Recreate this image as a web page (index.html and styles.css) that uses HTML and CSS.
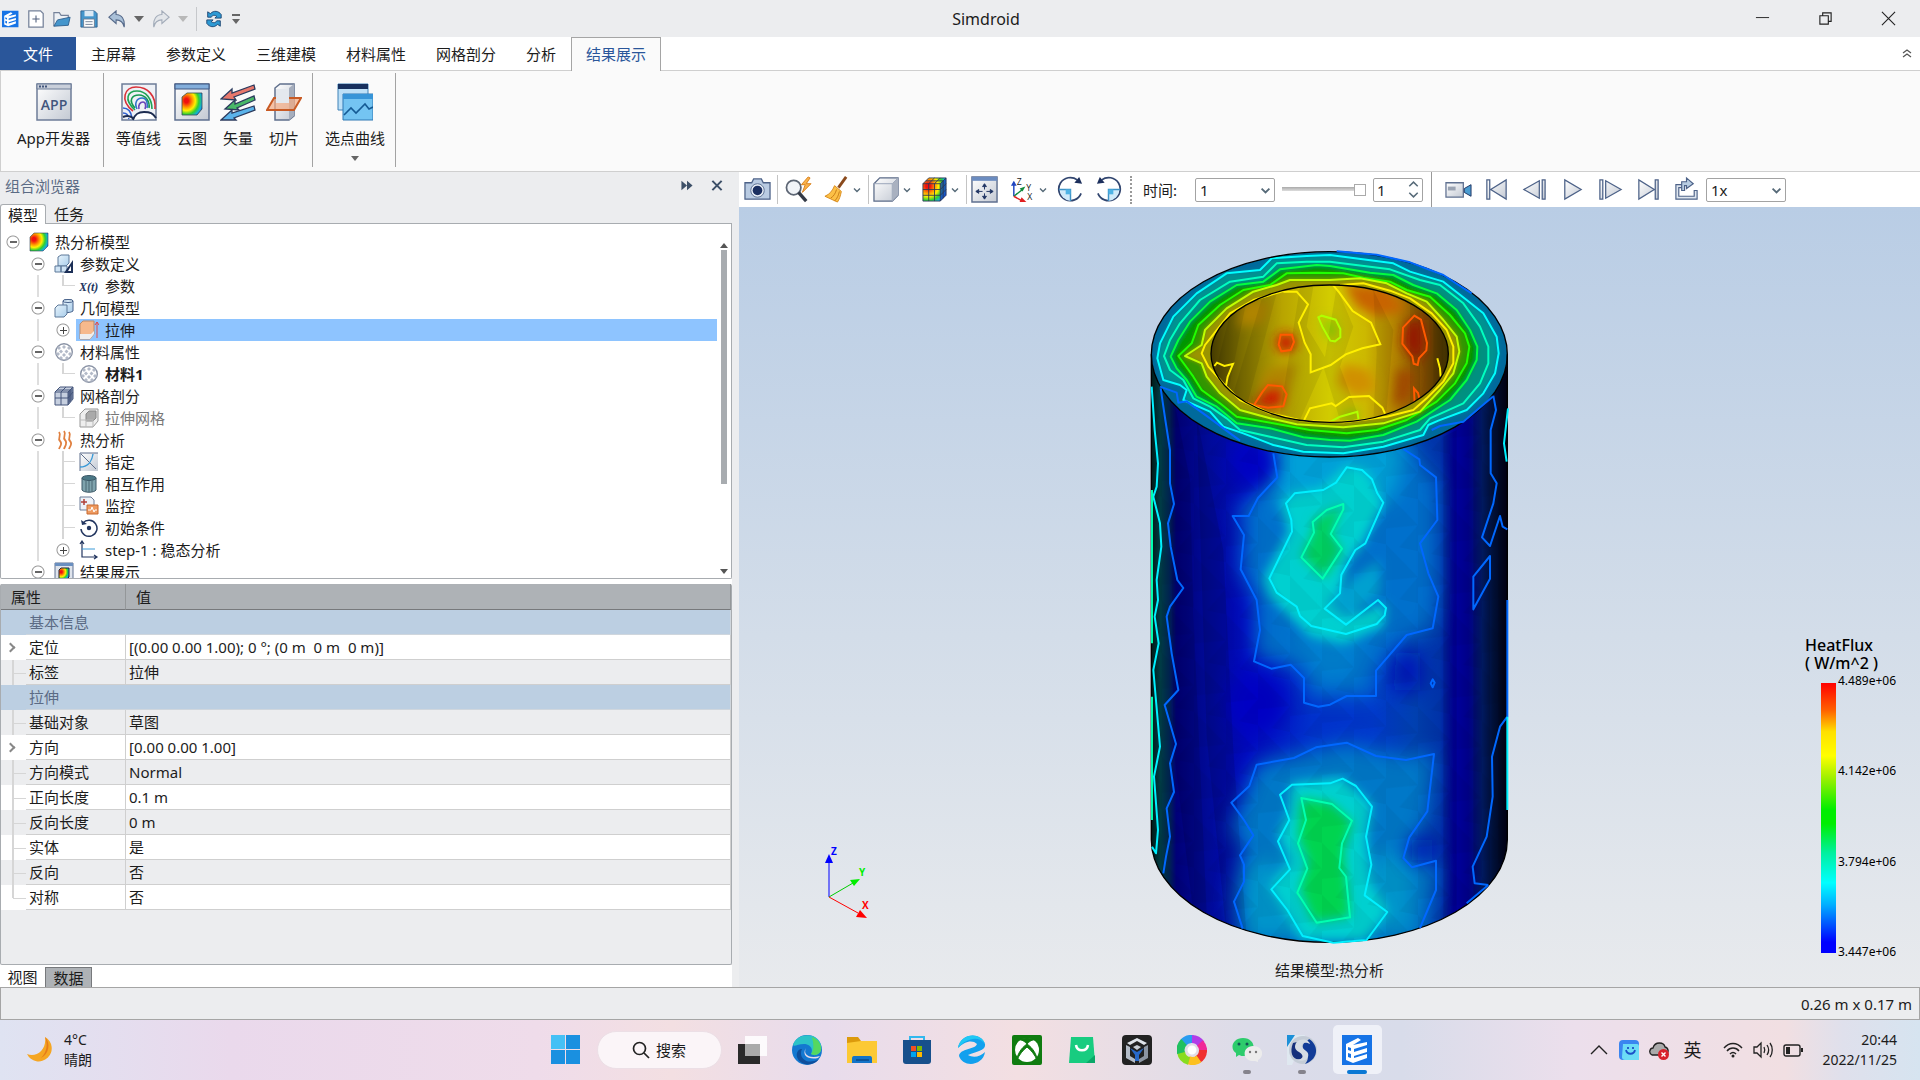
FILE: index.html
```html
<!DOCTYPE html>
<html lang="zh-CN">
<head>
<meta charset="utf-8">
<title>Simdroid</title>
<link rel="stylesheet" href="styles.css">
</head>
<body>
<svg class="defs" width="0" height="0" aria-hidden="true">
  <defs>
    <linearGradient id="steel" x1="0" y1="0" x2="1" y2="1"><stop offset="0" stop-color="#fff"/><stop offset="1" stop-color="#c3c9d3"/></linearGradient>
    <linearGradient id="sky" x1="0" y1="0" x2="1" y2="1"><stop offset="0" stop-color="#e8f4fc"/><stop offset="1" stop-color="#a9cdea"/></linearGradient>
    <radialGradient id="rainbow" cx=".22" cy=".35" r="1"><stop offset=".1" stop-color="#f01010"/><stop offset=".3" stop-color="#ff9500"/><stop offset=".45" stop-color="#fff000"/><stop offset=".62" stop-color="#30d030"/><stop offset=".78" stop-color="#10b0e0"/><stop offset=".92" stop-color="#1020e0"/></radialGradient>
    <symbol id="i-logo" viewBox="0 0 30 30"><path fill="#1673e6" d="M0 0h30v30H0z"/><path d="M4 9l12-6 3 2-8 5 14-3v3l-13 4v3l13-4v4l-13 4v2l13-4v4l-14 5-7-3z" fill="#fff"/><path d="M6 12l3 1v3l-3-1zM6 18l3 1v4l-3-1z" fill="#1673e6"/></symbol>
    <symbol id="i-mat" viewBox="0 0 20 20"><circle cx="10" cy="10" r="8.3" fill="#fff" stroke="#8a93a5" stroke-width="1.4"/><path d="M5 4l2 2-2 2-2-2zM10 3l2 2-2 2-2-2zM15 4l2 2-2 2-2-2zM7 7.500l2 2-2 2-2-2zM12.500 7.500l2 2-2 2-2-2zM4 10l2 2-2 2-2-2zM10 11l2 2-2 2-2-2zM16 10l2 2-2 2-2-2zM7 14l2 2-2 2-2-2zM13 14l2 2-2 2-2-2z" fill="#b3bac8"/></symbol>
    <symbol id="i-chev" viewBox="0 0 10 10"><path d="M2 3.500l3 3 3-3" fill="none" stroke="#566a78" stroke-width="1.400"/></symbol>
    <symbol id="i-cube" viewBox="0 0 28 28"><path d="M1 8l6-6h19v18l-6 6H1z" fill="url(#steel)" stroke="#5b6b88" stroke-width="1.300"/><path d="M1 8h19v18M20 8l6-6" fill="none" stroke="#98a3b8"/><path d="M20 8l6-6v18l-6 6z" fill="#a9b1c0"/></symbol>
    <symbol id="i-rotate" viewBox="0 0 28 28"><path d="M25 18A12 12 0 1 1 21 4" fill="none" stroke="#31456f" stroke-width="1.800"/><path d="M18 7l8 1-3-7z" fill="#1c2f5c"/><path d="M14 14v12A12 12 0 0 1 3 14z" fill="#cfeafa"/><path d="M2 14h12v12" fill="none" stroke="#3f93c6" stroke-width="1.500"/><path d="M9 14h5v5H9z" fill="#4fb3e5"/></symbol>
  </defs>
</svg>

<header class="titlebar">
  <div class="quick">
    <svg class="ic20"><use href="#i-logo"/></svg>
    <button aria-label="新建"><svg viewBox="0 0 20 20"><path d="M2 1h13l3 3v15H2z" fill="#fff" stroke="#75829a" stroke-width="1.400"/><path d="M10 6v8M6 10h8" stroke="#52617e" stroke-width="1.200"/></svg></button>
    <button class="wide" aria-label="打开"><svg viewBox="0 0 20 20"><path d="M1 18V3h6l2 3h8v4" fill="#eef1f5" stroke="#75829a" stroke-width="1.300"/><path d="M1 18l4-7 14-3-2 9z" fill="#4596cc" stroke="#2d5f8d"/></svg></button>
    <button class="wide" aria-label="保存"><svg viewBox="0 0 20 20"><path d="M1 1h15l3 3v15H1z" fill="#4596cc" stroke="#2d5f8d"/><path d="M5 1h10v6H5z" fill="#dce9f4"/><path d="M4 10h12v9H4z" fill="#fff" stroke="#6b7a92"/><path d="M6 13h8M6 16h8" stroke="#6b7a92"/></svg></button>
    <button class="wide" aria-label="撤销"><svg viewBox="0 0 20 20"><path d="M1 8l8-7v4c6 0 10 5 9 14-1-5-4-8-9-8v4z" fill="#a9c0d8" stroke="#566a8a" stroke-width="1.200"/></svg></button>
    <span class="tri"></span>
    <button aria-label="重做"><svg viewBox="0 0 20 20"><path d="M19 8l-8-7v4C5 5 1 10 2 19c1-5 4-8 9-8v4z" fill="#e3e6ea" stroke="#a3acb9" stroke-width="1.200"/></svg></button>
    <span class="tri faint"></span>
    <span class="qsep"></span>
    <button aria-label="刷新"><svg viewBox="0 0 20 20"><path d="M3 8V2l3 2c4-4 9-3 12 1v4h-7l2-2c-3-2-5-1-6 1zM17 12v6l-3-2c-4 4-9 3-12-1v-4h7l-2 2c3 2 5 1 6-1z" fill="#2e9ad4" stroke="#1d4470"/></svg></button>
    <button class="custom" aria-label="自定义"><svg viewBox="0 0 10 12"><path d="M1 1h8v2H1zM1 6h8l-4 5z" fill="#666"/></svg></button>
  </div>
  <h1>Simdroid</h1>
  <div class="winbtns">
    <button aria-label="最小化"><svg viewBox="0 0 16 16"><path d="M1 7h14" stroke="#222"/></svg></button>
    <button aria-label="还原"><svg viewBox="0 0 16 16"><path d="M2 5h9v9H2zM5 5V2h9v9h-3" fill="none" stroke="#222" stroke-width="1.200"/></svg></button>
    <button aria-label="关闭"><svg viewBox="0 0 16 16"><path d="M1 1l14 14M15 1L1 15" stroke="#222" stroke-width="1.200"/></svg></button>
  </div>
</header>

<nav class="menu">
  <button class="file">文件</button>
  <button>主屏幕</button><button>参数定义</button><button>三维建模</button><button>材料属性</button><button>网格剖分</button><button>分析</button>
  <button class="on">结果展示</button>
  <button class="collapse" aria-label="收起"><svg viewBox="0 0 12 12"><path d="M2 5l4-3 4 3M2 9l4-3 4 3" fill="none" stroke="#555" stroke-width="1.300"/></svg></button>
</nav>

<section class="ribbon">
  <div class="rgroup first">
    <button><svg viewBox="0 0 36 38"><path d="M1 1h34v36H1z" fill="url(#steel)" stroke="#6d7c98" stroke-width="1.500"/><path d="M1 1h34v5H1z" fill="#c9cfda" stroke="#6d7c98"/><path d="M3 3.500h9" stroke="#42567d" stroke-width="2" stroke-dasharray="2 1"/><text x="18" y="27" text-anchor="middle" class="apptext">APP</text></svg><span>App开发器</span></button>
  </div>
  <div class="rgroup">
    <button class="lead"><svg viewBox="0 0 36 38"><path d="M1 1h34v36H1z" fill="#eef1f6" stroke="#6d7c98" stroke-width="1.500"/><g fill="none" stroke-width="1.600"><path d="M12 28C-2 17 4 4 15 4c12 0 20 9 19 22" stroke="#d83038"/><path d="M14 27C2 16 7 8 16 8s15 8 15 18" stroke="#1fa355"/><path d="M14 25C7 17 11 12 18 12s11 7 10 13" stroke="#169a50"/><path d="M16 26c-3-6 0-11 5-11s6 6 5 10" stroke="#2f73c8"/><path d="M18 26c-1-4 1-7 4-7s3 4 2 7" stroke="#6a45b8"/><path d="M2 25c5 0 8 3 9 10M2 30c4 0 5 2 6 6" stroke="#2f60d0"/><path d="M12 37c2-6 5-8 11-8s9 1 12 6M2 34c5-2 8-1 11 2" stroke="#1d2c50" fill="#fff" stroke-width="2"/></g></svg><span>等值线</span></button>
    <button><svg viewBox="0 0 36 38"><path d="M1 1h34v36H1z" fill="url(#steel)" stroke="#5f7090" stroke-width="1.500"/><path d="M1 1h34v5H1z" fill="#83aedb" stroke="#3f5681"/><path d="M8 14l5-4h15v16l-5 6H8z" fill="url(#rainbow)" stroke="#3b4b4b" stroke-width=".8"/></svg><span>云图</span></button>
    <button><svg viewBox="0 0 36 38"><g stroke="#2c3b5e" stroke-width="1.300"><path d="M1 16l11-10v4l22-8 1 4-21 8 2 3z" fill="#e8786c"/><path d="M5 26l10-9v4l19-8 1 4-18 8 2 2z" fill="#48b868"/><path d="M1 37l11-10v3l22-7 1 4-21 8 2 2z" fill="#5bb3ea"/></g></svg><span>矢量</span></button>
    <button><svg viewBox="0 0 36 38"><path d="M9 5l5-4h14v32l-5 4H9z" fill="url(#steel)" stroke="#5f6f8c" stroke-width="1.500"/><path d="M23 5l5-4v32l-5 4z" fill="#a6aebd"/><path d="M1 27l7-12h27l-7 12z" fill="#f4a982" fill-opacity=".7" stroke="#c85a24" stroke-width="2"/><path d="M10 6h13v14H10z" fill="#e4e8ee"/></svg><span>切片</span></button>
  </div>
  <div class="rgroup">
    <button><svg viewBox="0 0 36 38"><path d="M1 1h30v26H1z" fill="#bde0f7" stroke="#3f82b8"/><path d="M1 1h30v5H1z" fill="#17305e"/><path d="M6 11h30v26H6z" fill="#74c4f2" stroke="#2f78b4"/><path d="M6 11h30v5H6z" fill="#3795d8"/><path d="M7 32l7-7 5 5 9-9 4 5 4-2" fill="none" stroke="#155a94" stroke-width="1.600"/></svg><span>选点曲线</span><i class="tri"></i></button>
  </div>
</section>

<main class="work">
  <aside class="dock">
    <div class="docktitle"><span>组合浏览器</span><button aria-label="展开"><svg viewBox="0 0 14 14"><path d="M1 2l6 5-6 5zM7 2l6 5-6 5z" fill="#3d5068"/></svg></button><button aria-label="关闭面板"><svg viewBox="0 0 14 14"><path d="M2 2l10 10M12 2L2 12" stroke="#3d5068" stroke-width="2.200"/></svg></button></div>
    <div class="docktabs"><button class="on">模型</button><button>任务</button></div>
    <div class="treebox">
      <ul class="tree">
        <li><div class="node"><i class="exp"></i><svg class="ic20"><path d="M1 5l4-4h14v13l-5 5H1z" fill="url(#rainbow)" stroke="#345" stroke-width=".6"/></svg><span>热分析模型</span></div>
        <ul>
          <li><div class="node"><i class="exp"></i><svg class="ic20"><path d="M4 3l3-2h8v8l-3 3H4z" fill="url(#sky)" stroke="#5d7899"/><path d="M1 12h6v6H1zM7 12h6v6H7z" fill="#cfe3f4" stroke="#5d7899"/><path d="M19 6v13h-9z" fill="#1c2f57"/><path d="M17 12v5h-3z" fill="#fff"/></svg><span>参数定义</span></div>
            <ul class="leafs"><li><div class="node"><i class="br end"></i><svg class="ic20"><text x="0" y="15" class="xt">X(t)</text></svg><span>参数</span></div></li></ul></li>
          <li><div class="node"><i class="exp"></i><svg class="ic20"><path d="M9 3c0-2 10-2 10 0v10c-3 2-7 2-10 0z" fill="url(#sky)" stroke="#47618a"/><ellipse cx="14" cy="3" rx="5" ry="1.500" fill="#d9ebf8" stroke="#47618a"/><path d="M1 10l3-3h9v9l-3 3H1z" fill="url(#sky)" stroke="#5d7899"/></svg><span>几何模型</span></div>
            <ul class="leafs"><li><div class="node sel"><i class="exp plus"></i><svg class="ic20"><path d="M1 4l3-3h11v13l-4 5H1z" fill="#f6b98c" stroke="#b98b6c"/><path d="M1 14h11l3-3v3l-4 5H1z" fill="#eee"/><path d="M18 18V2M16 5l2-3 2 3" stroke="#e04848" fill="none"/></svg><span>拉伸</span></div></li></ul></li>
          <li><div class="node"><i class="exp"></i><svg class="ic20"><use href="#i-mat"/></svg><span>材料属性</span></div>
            <ul class="leafs"><li><div class="node"><i class="br end"></i><svg class="ic20"><use href="#i-mat"/></svg><b>材料1</b></div></li></ul></li>
          <li><div class="node"><i class="exp"></i><svg class="ic20"><path d="M1 6l5-5h13v12l-5 6H1z" fill="#c6cfdf" stroke="#44557a"/><path d="M14 6l5-5v12l-5 6z" fill="#5f6f92"/><path d="M1 6h13v13M7 6v13M1 12h13l5-6M7 6l5-5M14 6l5-5M3 4h13v12" fill="none" stroke="#44557a"/></svg><span>网格剖分</span></div>
            <ul class="leafs"><li><div class="node dim"><i class="br end"></i><svg class="ic20"><path d="M1 6l5-5h13v12l-5 6H1z" fill="#eee" stroke="#999"/><path d="M7 6l3-3h7v7l-3 3H7z" fill="#aaa" stroke="#888"/><path d="M1 12h13v7M7 12v7" fill="none" stroke="#bbb"/></svg><span>拉伸网格</span></div></li></ul></li>
          <li><div class="node"><i class="exp"></i><svg class="ic20"><path d="M5 2c3 4-2 6 1 9s0 5-1 8M10 1c3 4-2 6 1 9s0 6-1 9M15 2c3 4-2 6 1 9s0 5-1 8" fill="none" stroke="#e08040" stroke-width="1.800"/></svg><span>热分析</span></div>
            <ul class="leafs">
              <li><div class="node"><i class="br"></i><svg class="ic20"><path d="M1 1h18v18H1z" fill="url(#steel)"/><path d="M1 19V1h18M2 2l15 15" fill="none" stroke="#5f6f8c"/><path d="M1 15C9 15 13 9 14 2" fill="none" stroke="#3a9ad8" stroke-width="1.500"/></svg><span>指定</span></div></li>
              <li><div class="node"><i class="br"></i><svg class="ic20"><path d="M3 4v12c2 3 12 3 14 0V4z" fill="#7fa3ad" stroke="#3d5968"/><ellipse cx="10" cy="4" rx="7" ry="2.500" fill="#4b7886" stroke="#3d5968"/><path d="M7 7v11M10 7v11M13 7v11" stroke="#4a6672"/></svg><span>相互作用</span></div></li>
              <li><div class="node"><i class="br"></i><svg class="ic20"><path d="M1 1h11l3 3v10H1z" fill="#eef2f8" stroke="#6d7c98"/><path d="M5 3v6M2 6h6" stroke="#b04038" stroke-width="1.500"/><path d="M8 9h11v9H8z" fill="#ee9a60" stroke="#c86a30"/><path d="M9 14h3l1-3 2 5 1-2h2" fill="none" stroke="#fff"/></svg><span>监控</span></div></li>
              <li><div class="node"><i class="br"></i><svg class="ic20"><path d="M4 5a8 8 0 1 1-2 6" fill="none" stroke="#22355f" stroke-width="1.500"/><path d="M2 2l1 5 5-1z" fill="#22355f"/><circle cx="10" cy="10" r="2.200" fill="#22355f"/></svg><span>初始条件</span></div></li>
              <li><div class="node"><i class="exp plus"></i><svg class="ic20"><path d="M3 2v15h15M1 4l2-3 2 3M15 15l3 2-3 2" fill="none" stroke="#22355f" stroke-width="1.200"/><path d="M3 9h13" stroke="#3a9ad8"/></svg><span>step-1 : 稳态分析</span></div></li>
            </ul></li>
          <li><div class="node"><i class="exp"></i><svg class="ic20"><path d="M1 1h18v18H1z" fill="#dfe4ec" stroke="#5f7090"/><path d="M1 1h18v3H1z" fill="#6a8fc0"/><path d="M5 8l2-2h8v9l-2 2H5z" fill="url(#rainbow)" stroke="#223"/></svg><span>结果展示</span></div></li>
        </ul></li>
      </ul>
      <div class="scroll"><i class="up"></i><i class="thumb"></i><i class="down"></i></div>
    </div>
    <div class="props">
      <table>
        <colgroup><col class="c-gut"><col class="c-name"><col></colgroup>
        <thead><tr><th colspan="2">属性</th><th>值</th></tr></thead>
        <tbody>
          <tr class="cat"><td></td><td colspan="2">基本信息</td></tr>
          <tr><td class="more"><i></i></td><td>定位</td><td class="pre">[(0.00 0.00 1.00); 0 °; (0 m  0 m  0 m)]</td></tr>
          <tr class="alt"><td class="line"></td><td>标签</td><td>拉伸</td></tr>
          <tr class="cat"><td></td><td colspan="2">拉伸</td></tr>
          <tr class="alt"><td class="line"></td><td>基础对象</td><td>草图</td></tr>
          <tr><td class="more"><i></i></td><td>方向</td><td>[0.00 0.00 1.00]</td></tr>
          <tr class="alt"><td class="line"></td><td>方向模式</td><td>Normal</td></tr>
          <tr><td class="line"></td><td>正向长度</td><td>0.1 m</td></tr>
          <tr class="alt"><td class="line"></td><td>反向长度</td><td>0 m</td></tr>
          <tr><td class="line"></td><td>实体</td><td>是</td></tr>
          <tr class="alt"><td class="line"></td><td>反向</td><td>否</td></tr>
          <tr><td class="line last"></td><td>对称</td><td>否</td></tr>
        </tbody>
      </table>
    </div>
    <div class="foottabs"><button>视图</button><button class="on">数据</button></div>
  </aside>

  <section class="stage">
    <div class="tools">
      <button aria-label="截图"><svg viewBox="0 0 28 28"><path d="M1 7h7l2-4h8l2 4h7v17H1z" fill="#b9cbe2" stroke="#4d6288" stroke-width="1.300"/><circle cx="14" cy="15" r="7" fill="#e9eff7" stroke="#5d7092"/><circle cx="14" cy="15" r="5" fill="#1b2f60"/></svg></button>
      <i class="sep"></i>
      <button aria-label="查询"><svg viewBox="0 0 28 28"><circle cx="9" cy="12" r="7.500" fill="#f1f4f8" stroke="#5d6674" stroke-width="1.800"/><path d="M14 17l8 9" stroke="#333a46" stroke-width="3.500"/><path d="M24 1l-7 8h4l-3 8 9-9h-5l4-6z" fill="#fbb34a" stroke="#d8801c"/></svg></button>
      <button aria-label="清除"><svg viewBox="0 0 28 28"><path d="M24 1L16 12" stroke="#8a4a1c" stroke-width="3"/><path d="M12 10l7 6c-1 5-2 8-4 11L2 21c5-2 8-6 10-11z" fill="#fcc046" stroke="#d88a1c"/><path d="M14 14c-1 4-3 7-6 9M17 16c-1 4-2 7-5 10" fill="none" stroke="#c87c18"/></svg></button><button class="drop" aria-label="清除选项"><svg><use href="#i-chev"/></svg></button>
      <i class="sep"></i>
      <button aria-label="显示方式"><svg><use href="#i-cube"/></svg></button><button class="drop" aria-label="显示方式选项"><svg><use href="#i-chev"/></svg></button>
      <button aria-label="云图显示"><svg viewBox="0 0 28 28"><path d="M2 8l6-6h18v18l-6 6H2z" fill="url(#rainbow)"/><path d="M20 8l6-6v18l-6 6z" fill="#1838c0" fill-opacity=".7"/><path d="M2 8h18v18H2zM2 14h18l6-6M2 20h18l6-6M8 8v18M14 8v18M2 8l6-6h18v18l-6 6M8 8l6-6M14 8l6-6M20 8l6-6M5 5h18v18" fill="none" stroke="#2c3654" stroke-width=".9"/></svg></button><button class="drop" aria-label="云图选项"><svg><use href="#i-chev"/></svg></button>
      <i class="sep"></i>
      <button aria-label="适应窗口"><svg viewBox="0 0 28 28"><path d="M1 1h26v26H1z" fill="url(#steel)" stroke="#5f7090" stroke-width="1.500"/><path d="M1 1h26v4H1z" fill="#6b8cc0"/><path d="M14 11v3M14 18v3M8 16h4M16 16h4M12 11l2-3 2 3zM12 21l2 3 2-3zM8 14l-3 2 3 2zM20 14l3 2-3 2z" stroke="#1f3463" fill="#1f3463"/></svg></button>
      <button aria-label="坐标系"><svg viewBox="0 0 28 28"><path d="M5 21V7" stroke="#2044c0" stroke-width="1.500"/><path d="M2 10l3-5 3 5z" fill="#2044c0"/><path d="M5 21l9-7" stroke="#108a3c" stroke-width="1.500"/><path d="M11 13l6-2-3 5z" fill="#108a3c"/><path d="M5 21l9 5" stroke="#e02020" stroke-width="1.500"/><path d="M13 22l5 5h-7z" fill="#e02020"/><text x="8" y="9" class="ax">Z</text><text x="18" y="16" class="ax">Y</text><text x="19" y="25" class="ax">X</text></svg></button><button class="drop" aria-label="坐标系选项"><svg><use href="#i-chev"/></svg></button>
      <button aria-label="顺时针旋转"><svg><use href="#i-rotate"/></svg></button>
      <button class="flip" aria-label="逆时针旋转"><svg><use href="#i-rotate"/></svg></button>
      <i class="grip"></i>
      <label for="time">时间:</label>
      <div class="combo"><select id="time"><option>1</option></select><svg><use href="#i-chev"/></svg></div>
      <input class="slide" type="range" min="0" max="1" value="1" aria-label="时间滑块">
      <div class="spin"><input type="text" value="1" aria-label="步数"><svg viewBox="0 0 12 18"><path d="M2 6l4-4 4 4M2 12l4 4 4-4" fill="none" stroke="#566a78" stroke-width="1.400"/></svg></div>
      <i class="sep tall"></i>
      <div class="play">
        <button aria-label="录制"><svg viewBox="0 0 28 28"><path d="M1 7h18v15H1z" fill="url(#steel)" stroke="#5f7090" stroke-width="1.300"/><path d="M3 11h8v4H3z" fill="#9aa3b2"/><path d="M20 13l7-4v12l-7-4z" fill="#4a9cd0" stroke="#1f3463"/></svg></button>
        <button aria-label="首帧"><svg viewBox="0 0 28 28"><path d="M4 4h3v20H4zM24 4v20L8 14z" fill="url(#steel)" stroke="#4d6288" stroke-width="1.300"/></svg></button>
        <button aria-label="上一帧"><svg viewBox="0 0 28 28"><path d="M22 4h3v20h-3zM19 5v18L3 14z" fill="url(#steel)" stroke="#4d6288" stroke-width="1.300"/></svg></button>
        <button aria-label="播放"><svg viewBox="0 0 28 28"><path d="M6 4v20l17-10z" fill="url(#steel)" stroke="#4d6288" stroke-width="1.300"/></svg></button>
        <button aria-label="下一帧"><svg viewBox="0 0 28 28"><path d="M3 4h3v20H3zM9 5v18l16-9z" fill="url(#steel)" stroke="#4d6288" stroke-width="1.300"/></svg></button>
        <button aria-label="末帧"><svg viewBox="0 0 28 28"><path d="M21 4h3v20h-3zM4 4v20l16-10z" fill="url(#steel)" stroke="#4d6288" stroke-width="1.300"/></svg></button>
        <button aria-label="循环"><svg viewBox="0 0 28 28"><path d="M11 9H3v15h22V15h-3v6H6v-9h5z" fill="#dfe6ef" stroke="#4d6288" stroke-width="1.200"/><path d="M9 15V6h5V2l7 6-7 5v-3h-2v5z" fill="#b8cde2" stroke="#4d6288" stroke-width="1.200"/></svg></button>
      </div>
      <div class="combo"><select aria-label="播放速度"><option>1x</option></select><svg><use href="#i-chev"/></svg></div>
    </div>

    <div class="view">
      <svg class="model" viewBox="0 0 1200 2160" role="img" aria-label="热分析结果模型">
        <defs>
          <clipPath id="cbody"><path d="M64 373V1829A534 308 0 0 0 1132 1829V373A534 308 0 0 1 64 373z"/></clipPath>
          <clipPath id="chole"><ellipse cx="599" cy="371" rx="356" ry="206"/></clipPath>
          <clipPath id="ctop"><ellipse cx="598" cy="373" rx="534" ry="308"/></clipPath>
          <linearGradient id="gbody" gradientUnits="userSpaceOnUse" x1="64" y1="0" x2="1132" y2="0"><stop offset="0" stop-color="#001a18"/><stop offset=".025" stop-color="#003c44"/><stop offset=".05" stop-color="#002450"/><stop offset=".07" stop-color="#000078"/><stop offset=".16" stop-color="#000a98"/><stop offset=".27" stop-color="#0008c0"/><stop offset=".45" stop-color="#0030cc"/><stop offset=".62" stop-color="#0038cc"/><stop offset=".74" stop-color="#0040b0"/><stop offset=".81" stop-color="#0032a8"/><stop offset=".85" stop-color="#0000a0"/><stop offset=".89" stop-color="#000088"/><stop offset=".93" stop-color="#001c6a"/><stop offset=".96" stop-color="#001038"/><stop offset="1" stop-color="#000014"/></linearGradient>
          <linearGradient id="ghole" gradientUnits="userSpaceOnUse" x1="243" y1="0" x2="955" y2="0"><stop offset="0" stop-color="#463c00"/><stop offset=".12" stop-color="#786a00"/><stop offset=".3" stop-color="#b8a400"/><stop offset=".5" stop-color="#d2cc00"/><stop offset=".65" stop-color="#ccb800"/><stop offset=".78" stop-color="#b08000"/><stop offset=".9" stop-color="#784800"/><stop offset="1" stop-color="#3c3000"/></linearGradient>
          <filter id="b40" x="-50%" y="-50%" width="200%" height="200%"><feGaussianBlur stdDeviation="30"/></filter>
          <filter id="b15" x="-50%" y="-50%" width="200%" height="200%"><feGaussianBlur stdDeviation="16"/></filter>
          <filter id="b6"><feGaussianBlur stdDeviation="6"/></filter>
          <pattern id="facet" width="96" height="156" patternUnits="userSpaceOnUse" patternTransform="skewY(12)"><path d="M0 0l96 78-96 30zM96 78v78H40z" fill="#000" fill-opacity=".04"/></pattern>
          <path id="k1" d="M600 75L790 100 840 125 940 155 1010 210 1060 250 1100 320 1106 370 1095 430 1060 490 1010 540 925 572 895 585 880 615 760 650 640 670 520 665 430 645 340 610 280 590 240 545 160 510 170 480 150 465 100 450 82 385 90 340 130 260 200 190 290 130 390 120 425 85 530 78z"/>
          <path id="k2" d="M600 95L780 118 870 150 930 165 1000 220 1050 290 1075 350 1075 400 1050 460 1000 520 900 565 870 600 760 635 640 652 530 645 420 620 330 600 290 565 240 530 190 505 160 450 120 420 102 378 120 330 150 280 210 210 300 155 400 140 440 100 530 95z"/>
          <path id="k3" d="M560 105L600 108 720 128 790 135 850 165 920 190 980 240 1020 300 1042 350 1040 390 1010 450 960 510 860 575 760 615 660 632 600 630 520 622 420 595 320 580 260 530 200 500 170 450 140 415 122 380 145 330 180 275 240 215 320 165 400 155 450 118z"/>
          <path id="k4" d="M560 128L640 130 700 143 780 155 830 180 900 200 960 255 1005 310 1018 350 1010 400 975 460 920 515 830 570 740 600 650 610 540 600 430 580 320 560 270 520 215 480 190 440 145 378 185 340 205 285 270 225 340 180 420 165 470 130z"/>
          <path id="k5" d="M480 150L600 150 690 145 770 160 830 190 890 215 940 270 980 320 988 365 970 430 930 480 870 545 760 580 640 592 500 583 420 565 330 540 270 490 230 440 215 400 165 378 215 345 225 300 290 235 370 185 440 165z"/>
        </defs>
        <g clip-path="url(#cbody)">
          <path d="M0 300h1200v1900H0z" fill="url(#gbody)"/>
          <g filter="url(#b40)">
            <path d="M430 640l400 0 90 120v350l-15 90-80 20-90 110v70H540l-20-80-145-40V1110l-45-90 10-160-30-5 130-130z" fill="#0070cc"/>
            <path d="M380 1600l270-60 180 40 80-10-20 190-70 130 100 10-40 260H330l-20-160 30-150-40-50z" fill="#0078c8"/>
            <path d="M430 620h400l-40 180-200 80-150-60z" fill="#00a0d8"/>
            <path d="M480 1220h240l-60 130H560z" fill="#0080d0"/>
            <path d="M340 1900h180v220H340zM720 1880h120v220H720z" fill="#009ccc" opacity=".8"/>
          </g>
          <g filter="url(#b15)">
            <path d="M650 705l60 15 50 100-60 120-50 60-15 90 45 60 90-30-10 70-120 52-100-22-120-120-20-55 75-140-22-90 40-30 80-10z" fill="#00d0d0"/>
            <path d="M485 1660l150-18 90 80-15 110 15 130 50 80-70 90H515l-95-165 60-70-35-80 30-70z" fill="#00d0d0"/>
          </g>
          <g filter="url(#b15)">
            <path d="M550 870l90-45-35 85 30 50-50 85-70-65 35-80z" fill="#00d060"/>
            <path d="M515 1705l90 15 60 55-25 90 10 90 10 105-110 15-40-100 25-80-30-75z" fill="#00d450"/>
            <path d="M660 1050l90-60v100l-100 80-60-50z" fill="#00a0d0"/>
          </g>
          <g filter="url(#b40)"><path d="M800 1270h70v110h-80zM845 1830h60v60h-60z" fill="#0010b8"/><ellipse cx="380" cy="1420" rx="90" ry="90" fill="#0000c4"/><ellipse cx="370" cy="700" rx="60" ry="60" fill="#0000c4"/></g>
          <path d="M64 100h1070v2040H64z" fill="url(#facet)"/>
          <g fill="#000" fill-opacity=".1"><path d="M120 450l60 300 10 400 40 900h-40l-60-500zM200 560l80 400 30 600 40 560h-60l-60-600z"/><path d="M1030 500h50v1500h-50zM1105 400h27v1500h-27zM980 600v1500h-40V620z"/></g>
        </g>
        <g clip-path="url(#ctop)">
          <ellipse cx="598" cy="373" rx="534" ry="308" fill="#006a9c"/>
          <g filter="url(#b6)">
            <use href="#k1" fill="#009292"/><use href="#k2" fill="#009080"/><use href="#k3" fill="#009600"/><use href="#k4" fill="#309600"/><use href="#k5" fill="#9a9400"/>
          </g>
        </g>
        <g clip-path="url(#chole)">
          <path d="M240 160h720v420H240z" fill="url(#ghole)"/>
          <g filter="url(#b15)">
            <path d="M640 160l130 10 60 70-90 20-60-30z" fill="#c86400"/><path d="M640 400l80 20 20 60-60 20-60-40z" fill="#d09000"/><path d="M340 210l80 10-20 60-80 10zM500 400l-90 20-20 50 70 60z" fill="#b08400"/>
            <circle cx="468" cy="338" r="30" fill="#c82000"/><path d="M410 470h50v60h-90z" fill="#cc1c00"/><path d="M830 270h50l5 90-30 40-40-60z" fill="#a01c00"/><path d="M800 420h60l-20 90-50 20z" fill="#a04800"/>
            <path d="M575 260l45 20v50l-30-10z" fill="#86d000"/><path d="M620 560l60-25v40z" fill="#80c800"/>
          </g>
          <g fill="#000" fill-opacity=".07"><path d="M300 250l50-40-60 300-40-60zM400 190l40 0-90 340-40-40zM510 170l40 0-20 120 60 100-80 180-60-20zM620 170l50 120-40 120 60 160h-60l-50-160zM730 180l60 120-20 240-40 30 10-200zM840 210l30 30v260l-30 30zM910 260l30 40v160l-30 20z"/></g>
          <g fill="none" stroke-width="6"><path d="M460 185h40l34 38-28 55 18 60 18 35v54l60-22 45-32 50-18 54-12-28-65-55-35-40-55-25-30M253 408l8-10 22 10 26-6-16 38-6 32M922 385l8 30 2 25M520 575l20-40 65-15 12 8 40-27 60-3 40 35 8 18" stroke="#fff000"/><path d="M565 262l10-5 42 12 14 28v25l-16 12-14-2-24-42zM600 576l30-16 52-15 4 26" stroke="#b0ff00"/><path d="M452 314h34l6 22-10 24-28 4-8-20zM372 525l26-40 16-20 42 4 14 24-10 36-46 4zM853 257l20 12 18 70-2 22-22 24-4 20-12-4-4-22-30-38 2-48zM852 475l12 14 6 24-16 12zM305 488l24 24 40 12" stroke="#ff5a00"/></g>
        </g>
        <g fill="none" stroke-width="6" stroke-linejoin="round">
          <use href="#k1" stroke="#00ffff"/><use href="#k2" stroke="#00ffc0"/><use href="#k3" stroke="#00ff40"/><use href="#k4" stroke="#20ff00"/><use href="#k5" stroke="#c0ff00"/>
          <path d="M630 165L700 160 780 182 840 205 905 250 950 300 970 350 970 400 940 455 890 505 850 540 770 560 640 577 520 573 420 550 330 510 280 460 235 410 215 370 225 345 245 320 300 250 370 210 460 183" stroke="#fff000"/>
          <g stroke="#000" stroke-width="4"><ellipse cx="599" cy="371" rx="356" ry="206"/><ellipse cx="598" cy="373" rx="534" ry="308"/><path d="M64 373V1829A534 308 0 0 0 1132 1829V373"/></g>
          <g stroke="#0068ff">
            <path d="M620 64L740 74 840 97 940 135 1025 190M90 470L140 488 145 518 170 514 240 565 330 632M92 475L106 570 120 660 120 760 132 822 114 880 122 950 142 1050 160 1074 120 1130 110 1160 125 1270 145 1380 104 1425 138 1542 120 1600 132 1686 110 1735 120 1820 108 1880 100 1930"/>
            <path d="M820 657L868 688 870 705 918 742 922 870 870 940 895 1030 925 1100 908 1195 830 1215 738 1322V1398H650L600 1424 565 1430 522 1418V1344L482 1304 424 1316 372 1294 390 1200 380 1110 332 1018 342 915 308 858H356L384 804 442 742 430 670"/>
            <path d="M338 2096L312 2015 342 1955V1904L330 1876 370 1816 342 1770 304 1718 358 1668 380 1604 492 1584 558 1552 650 1538 738 1578 828 1590 912 1572 892 1744 838 1822 820 1884 846 1912 918 1892V1980L870 2094"/>
            <path d="M1090 497L1098 540 1082 600V730L1100 760 1090 820 1056 922 1080 948 1110 858 1118 890 1132 898M1080 978V1046L1030 1138V1040zM1132 1110V1460L1110 1490 1086 1580 1088 1700 1070 1820 1028 1910 1034 1960 1075 1965M1075 1965L1010 2020M905 600L930 588 1000 575 1088 500M908 1348l6 10-6 14-6-12z"/>
          </g>
          <g stroke="#00f0ff">
            <path d="M650 712L696 720 726 748 742 790 760 818 706 940 676 960 634 1034 630 1090 584 1136 648 1184 744 1110 768 1134 764 1156 740 1182 648 1212 544 1188 510 1158 500 1130 440 1088 418 1045 486 905 484 870 468 820 494 790 580 780 618 758z"/>
            <path d="M610 2138L518 2118 472 2040 424 1978 480 1918 444 1834 478 1770 450 1694 486 1664 600 1660 638 1646 678 1668 726 1730 708 1820 724 1904 704 1996 772 2046 710 2130z"/>
            <path d="M65 470L74 600 84 700 80 770 70 800 90 880 94 950 80 1050 84 1110 74 1160 86 1240 70 1320 90 1550 72 1640 84 1800 78 1870 66 1850M1134 535L1122 640 1130 695M1132 1460V1740"/>
          </g>
          <g stroke="#00ffb0"><path d="M640 822L640 838 602 912 636 956 578 1046 514 982 552 908 548 876 590 840zM514 1704L606 1722 666 1772 636 1840 628 1914 648 1940 660 2062 560 2078 502 1988 532 1916 504 1840 528 1770z"/><path d="M66 780V1240M66 1400V1770"/></g>
        </g>
      </svg>
      <svg class="axes" viewBox="0 0 74 88" role="img" aria-label="坐标轴"><path d="M14 57V20" stroke="#00f"/><path d="M10 23l4-9 4 9z" fill="#00f"/><path d="M14 57l24-14" stroke="#0c0"/><path d="M35 40l10-1-6 7z" fill="#0e0"/><path d="M14 57l29 16" stroke="#f00"/><path d="M45 70l7 8-11-1z" fill="#f00"/><text x="16" y="15" fill="#00f">Z</text><text x="44" y="36" fill="#0e0">Y</text><text x="47" y="69" fill="#f00">X</text></svg>
      <div class="legend"><p>HeatFlux</p><p>( W/m^2 )</p><div class="scale"><i></i><ol><li>4.489e+06</li><li>4.142e+06</li><li>3.794e+06</li><li>3.447e+06</li></ol></div></div>
      <p class="caption">结果模型:热分析</p>
    </div>
  </section>
</main>

<footer class="status">0.26 m x 0.17 m</footer>

<div class="taskbar">
  <div class="weather"><svg viewBox="0 0 30 30"><path d="M20 2a13 13 0 1 1-18 17c9 4 20-4 18-17z" fill="#f5a623"/><path d="M20 2c6 6 4 17-4 21 6-6 7-14 4-21z" fill="#e57c1b"/></svg><p>4°C<br>晴朗</p></div>
  <div class="apps">
    <button aria-label="开始"><svg viewBox="0 0 30 30"><path d="M0 0h14v14H0zM15 0h14v14H15zM0 15h14v14H0zM15 15h14v14H15z" fill="#1a90e0"/><path d="M0 0h14v14H0z" fill="#45c0f5"/></svg></button>
    <button class="search"><svg viewBox="0 0 18 18"><circle cx="7.500" cy="7.500" r="6" fill="none" stroke="#222" stroke-width="1.700"/><path d="M12 12l5 5" stroke="#222" stroke-width="1.700"/></svg>搜索</button>
    <button aria-label="任务视图"><svg viewBox="0 0 30 30"><path d="M1 9h22v20H1z" fill="#2a2a2a"/><path d="M8 1h22v20H8z" fill="#fff" fill-opacity=".85"/><path d="M8 9h15v12H8z" fill="#aaa"/></svg></button>
    <button aria-label="Edge"><svg viewBox="0 0 30 30"><circle cx="15" cy="15" r="15" fill="#1478d0"/><path d="M1 10C5-3 26-3 29 10c2 9-6 12-10 9 3-6-2-10-7-10C6 9 2 12 1 10z" fill="#2cc3c8"/><path d="M20 2c9 3 12 14 6 17-3 2-7 0-7 0 4-5 2-12 1-17z" fill="#55d860"/><path d="M10 14c-4 8 4 17 17 10-6 8-19 7-22-2-1-4 1-8 5-8z" fill="#0f4f9c"/><path d="M14 13c-3 6 2 11 14 8l-2 2c-9 2-17-2-12-10z" fill="#e9dcea"/></svg></button>
    <button aria-label="文件资源管理器"><svg viewBox="0 0 30 30"><path d="M0 2h11l3 4h16v22H0z" fill="#dc9a0c"/><path d="M0 8l14-2h16v22H0z" fill="#fcc934"/><path d="M5 28v-4c0-3 1-3 3-3h14c2 0 3 0 3 3v4z" fill="#1474c8"/><path d="M9 25h13" stroke="#0a4a8a" stroke-width="1.500"/></svg></button>
    <button aria-label="Microsoft Store"><svg viewBox="0 0 30 30"><path d="M8 6V2h14v4" fill="none" stroke="#32b8ee" stroke-width="2"/><path d="M1 5h28v21q0 3-3 3H4q-3 0-3-3z" fill="#17508c"/><path d="M9 11h5v5H9z" fill="#f25022"/><path d="M15 11h5v5h-5z" fill="#7fba00"/><path d="M9 17h5v5H9z" fill="#00a4ef"/><path d="M15 17h5v5h-5z" fill="#ffb900"/></svg></button>
    <button aria-label="浏览器"><svg viewBox="0 0 30 30"><path d="M1 13C3-2 24-4 28 9c1 7-8 7-17 11 5 3 12 2 17-3-2 14-22 16-26 4 1-8 16-6 18-12-5-5-13-2-19 4z" fill="#12a0ee"/><path d="M1 13C3-2 24-4 28 9c-6-9-19-6-27 4z" fill="#20c8f4"/></svg></button>
    <button aria-label="Xbox"><svg viewBox="0 0 30 30"><rect width="30" height="30" rx="2" fill="#107c10"/><circle cx="15" cy="15" r="12" fill="#fff"/><path d="M6 5c4-1 7 2 9 4 2-2 5-5 9-4-2-2-16-2-18 0zM15 9C9 13 5 20 5 25c2-5 6-10 10-13 4 3 8 8 10 13 0-5-4-12-10-16z" fill="#107c10" stroke="#107c10"/></svg></button>
    <button aria-label="应用商店"><svg viewBox="0 0 30 30"><path d="M4 2h22l2 26H2z" fill="#18cc80"/><path d="M28 20v8h-9z" fill="#0aa868"/><path d="M9 10c1 7 11 7 12 0" fill="none" stroke="#fff" stroke-width="2.500"/></svg></button>
    <button aria-label="三维工具"><svg viewBox="0 0 30 30"><rect width="30" height="30" rx="4" fill="#222"/><path d="M15 3l10 5-3 2-7-4-7 4-3-2z" fill="#e0e4ea"/><path d="M4 10l4 2v9l5 3v4l-9-5z" fill="#b4bcc8"/><path d="M26 10l-4 2v9l-5 3v4l9-5z" fill="#8c95a2"/><path d="M11 12l4-2 4 2-4 3z" fill="#c8ced6"/><path d="M8 13l7 4 7-4-5 7v6h-4v-6z" fill="#2868c8"/></svg></button>
    <button aria-label="彩虹应用"><svg viewBox="0 0 30 30" fill="none" stroke-width="8"><path d="M6 8a11 11 0 0 1 10-4" stroke="#2a9cf0"/><path d="M15 4a11 11 0 0 1 9 5" stroke="#b23ce8"/><path d="M23 8a11 11 0 0 1 3 9" stroke="#f02898"/><path d="M26 15a11 11 0 0 1-6 10" stroke="#f03030"/><path d="M22 24a11 11 0 0 1-11 1" stroke="#fcc020"/><path d="M12 26a11 11 0 0 1-8-9" stroke="#88dc20"/><path d="M4 18a11 11 0 0 1 3-11" stroke="#20c060"/><circle cx="15" cy="15" r="3" fill="#fff" stroke="#fff" stroke-width="3"/></svg></button>
    <button class="run" aria-label="微信"><svg viewBox="0 0 30 30"><path d="M11 3c14 0 14 18 1 18-2 0-3 0-5-1l-3 2 0-4C-3 13 1 3 11 3z" fill="#2dcc6c"/><circle cx="7" cy="9" r="1.500" fill="#155"/><circle cx="15" cy="9" r="1.500" fill="#155"/><path d="M21 11c10 0 12 10 5 14v2l-3-1c-14 1-13-15-2-15z" fill="#ececec"/><circle cx="18" cy="17" r="1.200" fill="#777"/><circle cx="24" cy="17" r="1.200" fill="#777"/></svg></button>
    <button class="run" aria-label="仿真平台"><svg viewBox="0 0 30 30"><path d="M0 0h18L5 30H0z" fill="#dfe8f0"/><path d="M0 0h8L0 12z" fill="#1c90d8"/><circle cx="16" cy="15" r="14" fill="#c4ccd6"/><path d="M22 4c10 6 10 20-4 25C26 20 14 16 16 10c1-3 4-3 6-6z" fill="#123c98"/><path d="M6 8C2 18 6 26 14 24c6-2 4-6 0-8s-6-4-4-9z" fill="#16307c"/><path d="M9 8c5-6 13-3 14 1-6-3-9 0-8 3s8 4 6 10c-1 3-6 5-11 3 8-1 6-6 2-8s-5-5-3-9z" fill="#d6dce4"/></svg></button>
    <button class="act" aria-label="Simdroid"><svg><use href="#i-logo"/></svg></button>
  </div>
  <div class="tray">
    <svg viewBox="0 0 20 20"><path d="M2 14l8-8 8 8" fill="none" stroke="#222" stroke-width="1.400"/></svg>
    <svg viewBox="0 0 20 20"><rect width="20" height="20" rx="4" fill="#3a86f0"/><path d="M4 4h14q2 0 2 2v14H6q-3 0-3-3z" fill="#6cdcf6"/><path d="M7 10c1 5 8 5 9 0M9 7v2M14 7v2" fill="none" stroke="#1b50c8" stroke-width="1.800"/></svg>
    <svg viewBox="0 0 20 20"><path d="M3 15c-4-2-2-7 1-7 2-7 11-6 12-1 4 1 4 6 1 8z" fill="#aaa" stroke="#222" stroke-width="1.300"/><circle cx="14.500" cy="14.500" r="5.500" fill="#d8222c"/><path d="M12.500 12.500l4 4M16.500 12.500l-4 4" stroke="#fff" stroke-width="1.400"/></svg>
    <span class="ime">英</span>
    <svg viewBox="0 0 20 20"><path d="M1 8c5-6 13-6 18 0M4 11c3-4 9-4 12 0M7 14c2-2 4-2 6 0" fill="none" stroke="#222" stroke-width="1.400"/><circle cx="10" cy="16" r="1.500" fill="#222"/></svg>
    <svg viewBox="0 0 20 20"><path d="M1 7h3l4-4v14l-4-4H1zM11 7c1 2 1 4 0 6M14 5c2 3 2 7 0 10M17 3c3 4 3 10 0 14" fill="none" stroke="#222" stroke-width="1.300"/></svg>
    <svg viewBox="0 0 20 20"><rect x="1" y="5" width="16" height="11" rx="2" fill="none" stroke="#222" stroke-width="1.400"/><path d="M3 7h4v7H3zM18 8h2v4h-2z" fill="#222"/></svg>
    <p class="clock">20:44<br>2022/11/25</p>
  </div>
</div>
</body>
</html>
```

FILE: styles.css
```css
* { box-sizing: border-box; }
body {
  margin: 0;
  min-height: 100vh;
  display: grid;
  grid-template-rows: 37px 34px 101px 1fr 33px 60px;
  background: #ecedef;
  color: #1c1c1c;
  font: 15px/20px "Noto Sans", "Noto Sans CJK SC", sans-serif;
}
button { border: 0; padding: 0; background: none; font: inherit; color: inherit; display: flex; align-items: center; justify-content: center; }
p, h1, ul, ol { margin: 0; padding: 0; list-style: none; }
.defs { position: absolute; }
.ic20 { width: 20px; height: 20px; }

.titlebar { display: flex; align-items: center; background: #ecedef; }
.quick { width: 241px; display: flex; align-items: center; gap: 8px; padding-left: 2px; }
.quick button svg { width: 18px; height: 18px; }
.quick .wide { width: 23px; }
.tri { width: 0; border: 5px solid transparent; border-top: 6px solid #666; border-bottom: 0; }
.tri.faint { border-top-color: #b8b8b8; }
.qsep { width: 1px; height: 24px; background: #c6c8cb; }
.quick .custom svg { width: 10px; height: 12px; }
.titlebar h1 { flex: 1; text-align: center; font-size: 16px; font-weight: 400; }
.winbtns { display: flex; }
.winbtns button { width: 63px; height: 37px; }
.winbtns svg { width: 15px; height: 15px; }

.menu { display: flex; background: #fff; border-bottom: 1px solid #cfcfcf; }
.menu button { padding: 0 15px; }
.menu .file { width: 76px; background: #2a569a; color: #fff; }
.menu .on { background: #fafafa; color: #2a569a; border: 1px solid #a5a5a5; border-bottom: 0; margin-bottom: -1px; padding: 0 14px 2px; }
.menu .collapse { margin-left: auto; padding: 0 7px; }
.menu .collapse svg { width: 12px; height: 12px; }

.ribbon { display: flex; background: #fafafa; border-bottom: 1px solid #cfcfcf; border-left: 1px solid #cfcfcf; padding: 2px 0 4px; }
.rgroup { display: flex; gap: 10px; padding: 0 10px 0 12px; border-right: 1px solid #a3a3a3; }
.rgroup.first { padding-left: 16px; padding-right: 13px; }
.rgroup .lead { margin-right: 3px; }
.rgroup button { flex-direction: column; justify-content: flex-start; min-width: 36px; padding-top: 10px; white-space: nowrap; }
.rgroup svg { width: 36px; height: 38px; }
.rgroup span { margin-top: 7px; }
.rgroup .tri { margin-top: 8px; border-width: 5px 4px 0; }
.apptext { font: 600 14px "Open Sans", sans-serif; fill: #42567d; }

.work { display: grid; grid-template-columns: 733fr 1181fr; column-gap: 6px; min-height: 0; }
.dock { display: grid; grid-template-rows: 32px 20px 360fr 381fr 22px; background: #fff; min-height: 0; border-right: 1px solid #ecedef; }
.docktitle { display: flex; align-items: center; background: #ecedef; color: #5b6b85; padding: 0 0 5px 5px; }
.docktitle span { flex: 1; }
.docktitle button { width: 30px; height: 20px; }
.docktitle svg { width: 14px; height: 13px; }
.docktabs { display: flex; background: #ecedef; box-shadow: inset 0 -1px #a8acb0; }
.docktabs button { padding: 0 8px; }
.docktabs .on { background: #fff; border: 1px solid #a8acb0; border-bottom: 0; padding: 0 7px; border-radius: 3px 3px 0 0; }
.treebox { display: flex; border: 1px solid #a8acb0; border-top: 0; min-height: 0; height: 355px; margin-bottom: 5px; overflow: hidden; border-radius: 0 0 2px 2px; }
.tree { flex: 1; padding-top: 7px; }
.node { display: flex; align-items: center; height: 22px; padding-left: 5px; white-space: nowrap; }
.node > i { flex: none; width: 23px; height: 22px; }
.node > svg { flex: none; margin-right: 6px; }
.tree ul .node { padding-left: 30px; }
.tree .leafs .node { padding-left: 55px; background: linear-gradient(#dedede, #dedede) 36px 0 / 2px 22px no-repeat; }
.exp { background: radial-gradient(circle at 7px 11px, transparent 5px, #999 6px, #999 6px, transparent 7px), linear-gradient(#666, #666) 4px 10px / 7px 2px no-repeat; }
.exp.plus { background: radial-gradient(circle at 7px 11px, transparent 5px, #999 6px, #999 6px, transparent 7px), linear-gradient(#444, #444) 4px 11px / 7px 1px no-repeat, linear-gradient(#444, #444) 7px 8px / 1px 7px no-repeat; }
.br { background: linear-gradient(#d6d6d6, #d6d6d6) 6px 0 / 2px 22px no-repeat, linear-gradient(#d6d6d6, #d6d6d6) 7px 10px / 12px 1px no-repeat; }
.br.end { background-size: 2px 11px, 12px 1px; }
.tree .leafs .sel { background: linear-gradient(#dedede, #dedede) 36px 0 / 2px 22px no-repeat, linear-gradient(#8ec4ff, #8ec4ff) 75px 0 no-repeat; }
.dim { color: #777; }
.xt { font: italic bold 12px "Liberation Serif", serif; fill: #22355f; }
.scroll { width: 14px; display: flex; flex-direction: column; align-items: center; padding: 19px 0 4px; }
.scroll .up { border: 4px solid transparent; border-bottom: 5px solid #555; border-top: 0; }
.scroll .thumb { width: 6px; height: 234px; background: #a8acb0; margin-top: 2px; }
.scroll .down { border: 4px solid transparent; border-top: 5px solid #555; border-bottom: 0; margin-top: auto; }

.props { border: 1px solid #a8acb0; border-top: 0; background: #ecedef; border-radius: 2px; }
table { width: 100%; border-collapse: separate; border-spacing: 0; table-layout: fixed; }
.c-gut { width: 25px; }
.c-name { width: 100px; }
th { height: 26px; background: #aeb2b6; text-align: left; font-weight: 400; padding: 0 0 0 10px; border-right: 1px solid #949799; border-bottom: 1px solid #77797c; }
td { height: 25px; padding: 0 3px; background: #fff; border-bottom: 1px solid #cfcfcf; border-right: 1px solid #cfcfcf; }
td:first-child { border: 0; padding: 0; }
.alt td { background-color: #ecedef; }
.cat td { background: #bccfe2; color: #5b6b85; border-color: #cfd6dd; }
.pre { white-space: pre; }
.more i { display: block; width: 7px; height: 7px; margin-left: 6px; border: solid #888; border-width: 2px 2px 0 0; transform: rotate(45deg); }
td.line { background-image: linear-gradient(#d6d6d6, #d6d6d6), linear-gradient(#d6d6d6, #d6d6d6); background-repeat: no-repeat; background-position: 11px 0, 12px 13px; background-size: 2px 25px, 13px 1px; }
td.last { background-size: 2px 13px, 13px 1px; }
.foottabs { display: flex; padding-top: 2px; background: #fff; }
.foottabs button { width: 45px; }
.foottabs .on { width: 47px; background: #aeb2b6; border: 1px solid #77797c; border-bottom: 0; }

.stage { display: grid; grid-template-rows: 35px 1fr; min-width: 0; }
.tools { display: flex; align-items: center; background: #fff; padding-left: 4px; }
.tools button { flex: none; width: 28px; height: 28px; }
.tools button svg { width: 27px; height: 27px; }
.tools button + button { margin-left: 10px; }
.tools .drop { width: 14px; }
.tools button + .drop { margin-left: 0; }
.tools .drop + button { margin-left: 6px; }
.tools .drop svg { width: 10px; height: 10px; }
.flip svg { transform: scaleX(-1); }
.ax { font: 9px "Open Sans", sans-serif; fill: #222; }
.sep { flex: none; width: 1px; height: 29px; margin: 0 6px; background: #c4c4c4; }
.drop + .sep { margin: 0 3px 0 4px; }
.sep.tall { height: 35px; margin: 0 12px 0 8px; background: #999; }
.grip { width: 0; height: 28px; border-left: 2px dotted #999; margin: 0 11px 0 8px; }
.tools label { width: 52px; }
.combo { position: relative; width: 80px; height: 24px; }
.combo select { width: 100%; height: 100%; appearance: none; border: 1px solid #a3a3a3; border-radius: 2px; background: #fff; padding: 0 4px; font: inherit; color: inherit; }
.combo svg { position: absolute; right: 3px; top: 6px; width: 13px; height: 13px; pointer-events: none; }
.slide { appearance: none; width: 84px; height: 20px; margin: 0 7px; background: linear-gradient(#aaa, #ddd) 0 7px / 72px 4px no-repeat; }
.slide::-webkit-slider-thumb { appearance: none; width: 12px; height: 12px; background: #fff; border: 1px solid #aaa; }
.spin { position: relative; width: 50px; height: 24px; }
.spin input { width: 100%; height: 100%; border: 1px solid #a3a3a3; border-radius: 2px; padding: 0 3px; font: inherit; color: inherit; }
.spin svg { position: absolute; right: 3px; top: 2px; width: 13px; height: 19px; }
.play { display: flex; margin-right: 6px; }

.view { position: relative; display: flex; flex-direction: column; align-items: center; justify-content: flex-end; background: linear-gradient(#b9cde5, #d3dde9 55%, #e8eaed); overflow: hidden; }
.model { width: 400px; height: 720px; }
.caption { height: 37px; padding-top: 10px; }
.axes { position: absolute; left: 76px; bottom: 59px; width: 74px; height: 88px; }
.axes text { font: bold 10px "Open Sans", sans-serif; }
.legend { position: absolute; right: 18px; bottom: 26px; width: 99px; color: #000; }
.legend p { font-size: 16px; font-weight: 500; line-height: 18px; padding-left: 2px; }
.scale { display: flex; gap: 2px; padding-left: 18px; height: 289px; }
.scale i { width: 15px; height: 270px; margin-top: 11px; background: linear-gradient(red, #ff6000 10%, #ffe000 18%, #ff0 27%, #a0f000 35%, #0e0 47%, #0e0 52%, #00f0a0 63%, #0ff 74%, #00b0ff 82%, #0040ff 91%, #00f 96%); }
.scale ol { display: flex; flex-direction: column; justify-content: space-between; font-size: 12px; line-height: 18px; }

.status { border: 1px solid #a5a5a5; background: #ecedef; text-align: right; padding: 6px 7px; }

.taskbar { display: grid; grid-template-columns: 1fr auto 1fr; padding-left: 3px; background: linear-gradient(90deg, #dfe3f2, #ead9ec 12%, #efdcea 28%, #f3dfe2 35%, #e8dcec 43%, #f3dfe2 53%, #dcdce9 65%, #d8dcea 73%, #ecdfec 82%, #f1dfe2 93%, #dfe0ec 96%, #d6e4f0); }
.weather { display: flex; align-items: center; gap: 9px; padding-left: 22px; font-size: 14px; }
.weather svg { width: 30px; height: 30px; }
.apps { display: flex; gap: 6px; align-items: center; padding-bottom: 1px; }
.apps button { position: relative; width: 49px; height: 49px; }
.apps svg { width: 30px; height: 30px; }
.apps .search { width: 125px; height: 38px; border-radius: 19px; background: #fbf5f8; gap: 6px; border: 1px solid #ecdfe6; }
.apps .search svg { width: 18px; height: 18px; }
.act { background: #eff1f8; border-radius: 5px; }
.run::after, .act::after { content: ""; position: absolute; bottom: 0; width: 8px; height: 4px; border-radius: 2px; background: #85838c; }
.act::after { width: 20px; background: #0a78d4; }
.tray { display: flex; align-items: center; justify-content: flex-end; gap: 10px; padding-right: 23px; }
.tray svg { width: 20px; height: 20px; }
.ime { font-size: 18px; margin: 0 11px 0 5px; }
.clock { text-align: right; font-size: 14px; margin-left: 10px; }
```
